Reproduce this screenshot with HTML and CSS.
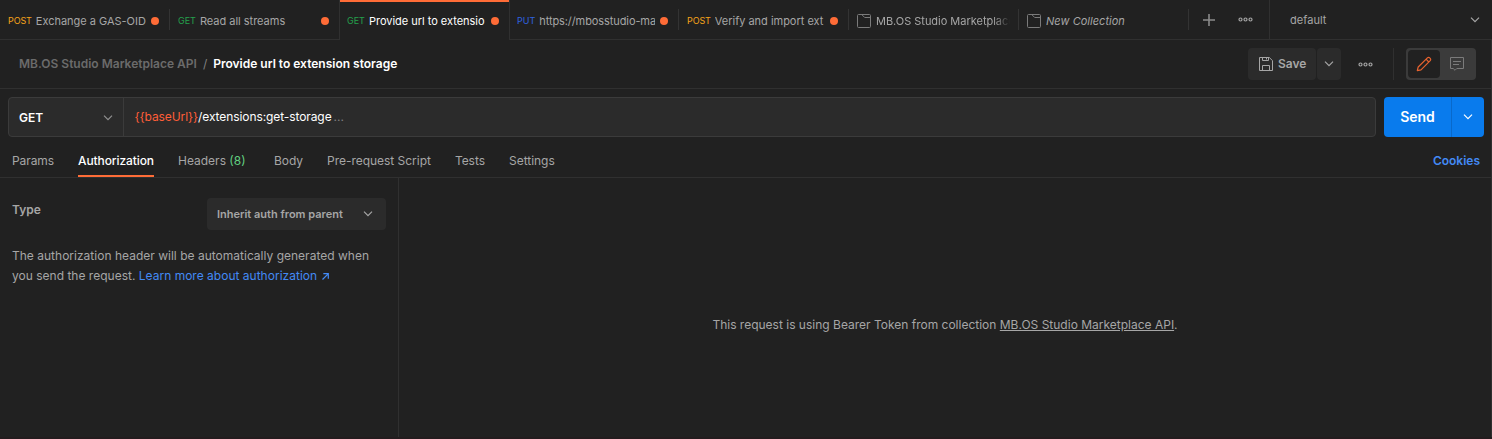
FILE: index.html
```html
<!DOCTYPE html>
<html lang="en">
<head>
<meta charset="utf-8">
<title>Provide url to extension storage</title>
<link rel="stylesheet" href="styles.css">
</head>
<body>
<svg class="defs" width="0" height="0">
  <symbol id="chevron" viewBox="0 0 10 6"><path d="M1 .7 5 4.7 9 .7" fill="none" stroke="currentColor" stroke-width="1.2"/></symbol>
  <symbol id="more" viewBox="0 0 15 5"><g fill="none" stroke="currentColor" stroke-width="1.2"><circle cx="2.5" cy="2.5" r="1.5"/><circle cx="7.5" cy="2.5" r="1.5"/><circle cx="12.5" cy="2.5" r="1.5"/></g></symbol>
  <symbol id="collection" viewBox="0 0 14 14"><path d="M2 .5h10.500a1 1 0 0 1 1 1v11a1 1 0 0 1-1 1h-11a1 1 0 0 1-1-1v-11a1 1 0 0 1 1-1h3.200l3 3h5.800" fill="none" stroke="currentColor"/></symbol>
</svg>
<div class="app">
  <nav class="tabbar">
    <div class="tab"><span class="method post">POST</span><span class="name">Exchange a GAS-OID</span><i class="dot"></i></div>
    <div class="tab last"><span class="method get">GET</span><span class="name">Read all streams</span><i class="dot"></i></div>
    <div class="tab active"><span class="method get">GET</span><span class="name">Provide url to extensio</span><i class="dot"></i></div>
    <div class="tab after-active"><span class="method put">PUT</span><span class="name clip">https://mbosstudio-marketplace</span><i class="dot"></i></div>
    <div class="tab"><span class="method post">POST</span><span class="name">Verify and import ext</span><i class="dot"></i></div>
    <div class="tab"><svg class="folder" width="14" height="14"><use href="#collection"/></svg><span class="name fade">MB.OS Studio Marketplace API</span></div>
    <div class="tab"><svg class="folder" width="14" height="14"><use href="#collection"/></svg><span class="name italic">New Collection</span></div>
    <div class="tab-actions">
      <svg width="12" height="12" viewBox="0 0 12 12"><path d="M6 0v12M0 6h12" stroke="#8b8b8b" stroke-width="1.6"/></svg>
      <svg width="15" height="5"><use href="#more"/></svg>
    </div>
    <div class="environment"><span>default</span><svg width="10" height="6"><use href="#chevron"/></svg></div>
  </nav>
  <main class="request">
    <header class="title-row">
      <div class="crumbs"><span class="parent">MB.OS Studio Marketplace API</span><span class="slash">/</span><span class="current">Provide url to extension storage</span></div>
      <div class="save"><svg width="14" height="14" viewBox="0 0 14 14"><path d="M.5.5h9.800l3.200 3.200v9.800H.5zM3.500.5v3h6v-3M3.500 13.500v-5h7v5M7.500.5v2" fill="none" stroke="currentColor"/></svg>Save</div>
      <div class="save-menu"><svg width="10" height="6"><use href="#chevron"/></svg></div>
      <svg class="request-more" width="15" height="5"><use href="#more"/></svg>
      <div class="mode-group">
        <div class="modes">
          <div class="mode selected"><svg width="16" height="16" viewBox="0 0 16 16"><g fill="none" stroke="currentColor" stroke-width="1.200" stroke-linejoin="round"><path d="m1.300 14.700.9-3.700 9.200-9.200a1.600 1.600 0 0 1 2.300 0l.5.5a1.600 1.600 0 0 1 0 2.300L5 13.800z"/><path d="m10 3.200 2.800 2.800"/></g></svg></div>
          <div class="mode"><svg width="14" height="14" viewBox="0 0 14 14"><path d="M.5.500h13v11H6.800L5 13.300 3.200 11.500H.5zM3 4.500h8M3 7.500h6" fill="none" stroke="#7b7b7b"/></svg></div>
        </div>
      </div>
    </header>
    <section class="url-row">
      <div class="url-box">
        <div class="method-select"><span>GET</span><svg width="10" height="6"><use href="#chevron"/></svg></div>
        <div class="url"><span class="variable">{{baseUrl}}</span>/extensions:get-storage<span class="ellipsis">...</span></div>
      </div>
      <div class="send"><div class="send-label">Send</div><div class="send-menu"><svg width="10" height="6"><use href="#chevron"/></svg></div></div>
    </section>
    <nav class="sections">
      <span class="section">Params</span><span class="section chosen">Authorization</span><span class="section headers">Headers <b>(8)</b></span><span class="section">Body</span><span class="section">Pre-request Script</span><span class="section">Tests</span><span class="section">Settings</span><span class="cookies">Cookies</span>
    </nav>
    <div class="content">
      <aside class="auth">
        <div class="auth-type"><span class="label">Type</span><div class="select"><span>Inherit auth from parent</span><svg width="10" height="6"><use href="#chevron"/></svg></div></div>
        <p class="help">The authorization header will be automatically generated when<br>you send the request. <span class="link">Learn more about authorization <svg width="7" height="7" viewBox="0 0 7 7"><path d="M.5 6.500 6.200.8M1.300.7h5v5" fill="none" stroke="currentColor" stroke-width="1.200"/></svg></span></p>
      </aside>
      <div class="message"><p>This request is using Bearer Token from collection <u>MB.OS Studio Marketplace API</u>.</p></div>
    </div>
  </main>
</div>
</body>
</html>
```

FILE: styles.css
```css
* { box-sizing: border-box; }
body { margin: 0; background: #212121; color: #a6a6a6; font: 12px/20px Inter, sans-serif; overflow: hidden; }
svg { display: block; flex: none; }
.defs { position: absolute; }
p { margin: 0; }
.app { height: 439px; display: flex; flex-direction: column; white-space: nowrap; border-bottom: 2px solid #231c1e; }
.tabbar { height: 40px; display: flex; flex: none; font-size: 11px; }
.tab { width: 170px; flex: none; display: flex; align-items: center; padding: 2px 11px 0 8px; border-bottom: 1px solid #303030; background: linear-gradient(#333, #333) right 9px / 1px 21px no-repeat; }
.tab.last { background: none; width: 169px; padding-right: 10px; }
.tab.active { border: solid #303030; border-width: 0 1px; width: 171px; padding: 1px 10px 0 7px; background: linear-gradient(#ff6c37, #ff6c37) top / 100% 2px no-repeat; color: #fff; }
.tab.after-active { width: 169px; padding-left: 7px; }
.method { font-size: 9px; margin-right: 4px; }
.post { color: #f5a31a; letter-spacing: -0.1px; }
.get { color: #24a04c; }
.put { color: #2f63e0; }
.name { flex: 1; min-width: 0; overflow: hidden; letter-spacing: -0.02px; }
.name.clip { letter-spacing: -0.09px; }
.fade { mask-image: linear-gradient(to right, #000 calc(100% - 16px), transparent); }
.tab .fade { margin-right: -2px; }
.italic { font-style: italic; letter-spacing: 0.03px; }
.folder { color: #7b7b7b; margin-right: 5px; }
.dot { width: 8px; height: 8px; border-radius: 50%; background: #ff6c37; flex: none; margin-left: 5px; }
.tab-actions { flex: 1; display: flex; align-items: center; gap: 23px; padding-left: 14px; border-bottom: 1px solid #303030; }
.environment { width: 223px; display: flex; align-items: center; justify-content: space-between; padding: 1px 12px 0 20px; border-left: 1px solid #303030; border-bottom: 1px solid #303030; }
.environment span { letter-spacing: 0.05px; }
.request { flex: 1; display: flex; flex-direction: column; border-right: 1px solid #303030; min-height: 0; }
.title-row { height: 49px; display: flex; align-items: center; flex: none; padding: 0 15px 0 19px; border-bottom: 1px solid #303030; font-weight: 600; }
.crumbs { flex: 1; display: flex; gap: 6px; }
.parent { color: #6b6b6b; }
.slash { color: #808080; font-weight: 400; }
.current { color: #fff; }
.save, .save-menu { height: 32px; display: flex; align-items: center; background: #2b2b2b; border-radius: 4px; }
.save { width: 68px; padding-left: 11px; gap: 5px; margin-right: 1px; }
.save-menu { width: 24px; justify-content: center; }
.request-more { margin-left: 17px; }
.mode-group { height: 32px; margin-left: 20px; padding-left: 12px; border-left: 1px solid #303030; }
.modes { display: flex; width: 70px; height: 32px; padding: 2px; border-radius: 4px; background: #3b3b3b; }
.mode { width: 34px; display: flex; align-items: center; justify-content: center; }
.mode.selected { width: 32px; border-radius: 4px; background: #212121; color: #e8632f; }
.url-row { display: flex; gap: 8px; padding: 8px 7px 8px 8px; }
.url-box { flex: 1; height: 40px; display: flex; background: #2b2b2b; border: 1px solid #3b3b3b; border-radius: 4px; }
.method-select { width: 115px; display: flex; align-items: center; justify-content: space-between; padding: 2px 10px 0; border-right: 1px solid #3b3b3b; color: #fff; font-weight: 600; }
.method-select svg { color: #909090; }
.url { padding: 9px 10.5px; color: #fff; letter-spacing: -0.09px; }
.variable { color: #ff5e38; }
.ellipsis { color: #808080; margin-left: 2px; letter-spacing: 0; }
.send { width: 100px; height: 40px; display: flex; border-radius: 4px; background: #097bed; color: #fff; }
.send-label { width: 67px; display: flex; align-items: center; justify-content: center; font-size: 14px; font-weight: 600; }
.send-menu { flex: 1; display: flex; align-items: center; justify-content: center; border-left: 1px solid #0869cb; }
.sections { height: 33px; display: flex; flex: none; gap: 24px; padding: 0 11px 0 12px; border-bottom: 1px solid #303030; line-height: 31px; }
.section { letter-spacing: -0.03px; }
.section:first-child { width: 42px; letter-spacing: -0.08px; }
.section b { font-weight: 400; color: #62cf80; }
.section.chosen { width: 76px; letter-spacing: -0.1px; color: #fff; font-weight: 500; box-shadow: inset 0 -2px #ff6c37; }
.section.headers { width: 72px; letter-spacing: 0; }
.cookies { margin-left: auto; color: #438af5; font-weight: 600; }
.content { flex: 1; display: flex; min-height: 0; }
.auth { width: 399px; padding: 20px 12px 0; border-right: 1px solid #303030; }
.auth-type { display: flex; justify-content: space-between; }
.label { font-weight: 600; line-height: 24px; }
.select { width: 179px; height: 32px; display: flex; align-items: center; justify-content: space-between; padding: 0 13px 0 10px; border-radius: 4px; background: #2b2b2b; font-size: 11px; font-weight: 600; }
.help { margin-top: 16px; letter-spacing: 0.01px; }
.link { color: #438af5; }
.link svg { display: inline-block; margin-left: 1px; }
.message { flex: 1; display: flex; align-items: center; justify-content: center; padding-top: 34px; }
```
